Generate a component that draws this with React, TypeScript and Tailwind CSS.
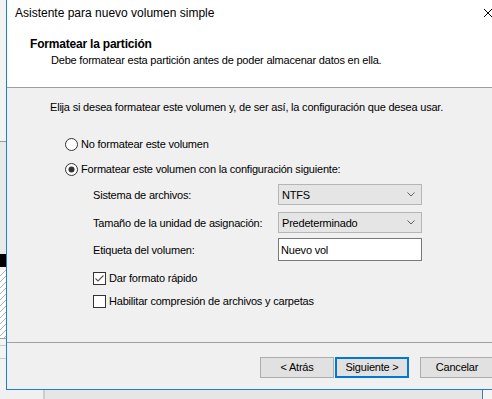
import React from "react";

function Radio({ checked }: { checked?: boolean }) {
  return (
    <svg width="13" height="13" viewBox="0 0 13 13" className="shrink-0">
      <circle cx="6.5" cy="6.5" r="6" fill="#ffffff" stroke="#333333" strokeWidth="1" />
      {checked && <circle cx="6.5" cy="6.5" r="3" fill="#333333" />}
    </svg>
  );
}

function Check({ checked }: { checked?: boolean }) {
  return (
    <svg width="13" height="13" viewBox="0 0 13 13" className="shrink-0">
      <rect x="0.5" y="0.5" width="12" height="12" fill="#ffffff" stroke="#333333" strokeWidth="1" />
      {checked && (
        <polyline points="2.5,6.5 5,9 10.5,3.5" fill="none" stroke="#555555" strokeWidth="1.1" />
      )}
    </svg>
  );
}

function Chevron() {
  return (
    <svg width="8" height="5" viewBox="0 0 8 5" className="shrink-0">
      <polyline points="0.5,0.5 4,4 7.5,0.5" fill="none" stroke="#606060" strokeWidth="1" />
    </svg>
  );
}

function Combo({ value }: { value: string }) {
  return (
    <div className="h-[21px] w-[144px] bg-[#e5e5e5] border border-[#b5b5b5] flex items-center justify-between pl-[3px] pr-[6px]">
      <span className="text-[11px] tracking-[-0.2px] text-black leading-[16px]">{value}</span>
      <Chevron />
    </div>
  );
}

export default function App() {
  return (
    <div className="relative w-[492px] h-[399px] overflow-hidden bg-[#f0f0f0] font-['Liberation_Sans',Arial,sans-serif] text-black">
      {/* desktop behind: left strip */}
      <div className="absolute left-0 top-0 w-[6px] h-[390px] bg-[#f3f3f3]">
        <div className="absolute left-0 top-[141px] w-[6px] h-[1px] bg-[#9a9a9a]" />
        <div className="absolute left-0 top-[142px] w-[6px] h-[112px] bg-[#e9e9e9]" />
        <div className="absolute left-0 top-[254px] w-[6px] h-[13px] bg-black" />
        <div className="absolute left-0 top-[270px] w-[6px] h-[68px] bg-white">
          <svg width="6" height="68" viewBox="0 0 6 68">
            {Array.from({ length: 12 }).map((_, i) => (
              <line key={i} x1="0" y1={i * 6 + 6} x2="6" y2={i * 6} stroke="#9a9a9a" strokeWidth="0.8" />
            ))}
          </svg>
        </div>
        <div className="absolute left-0 top-[338px] w-[6px] h-[1px] bg-[#a0a0a0]" />
        <div className="absolute left-0 top-[345px] w-[6px] h-[1px] bg-[#c8c8c8]" />
        <div className="absolute left-0 top-[358px] w-[6px] h-[1px] bg-[#c8c8c8]" />
      </div>
      {/* desktop behind: bottom strip */}
      <div className="absolute left-0 top-[390px] w-[492px] h-[9px] bg-[#e6e6e6]">
        <div className="absolute left-0 top-0 w-[43px] h-[9px] bg-[#f0f0f0]" />
        <div className="absolute left-[43px] top-0 w-[2px] h-[9px] bg-[#cdcdcd]" />
        <div className="absolute left-[482px] top-0 w-[1px] h-[9px] bg-[#4a78a8]" />
        <div className="absolute left-[483px] top-0 w-[9px] h-[9px] bg-[#f4f4f4]" />
      </div>

      {/* window */}
      <div className="absolute left-[6px] top-0 w-[505px] h-[390px] border-l border-b border-[#1a80d6] bg-white flex flex-col">
        {/* title bar */}
        <div className="h-[25px] flex items-center bg-white">
          <span className="pl-[8px] text-[12px] leading-[16px] mt-[1px]">Asistente para nuevo volumen simple</span>
          <div className="ml-auto w-[46px] h-[25px] flex items-center justify-center">
            <svg width="10" height="10" viewBox="0 0 10 10">
              <line x1="1" y1="1" x2="9" y2="9" stroke="#000" strokeWidth="1" />
              <line x1="9" y1="1" x2="1" y2="9" stroke="#000" strokeWidth="1" />
            </svg>
          </div>
        </div>
        {/* header */}
        <div className="h-[62px] bg-white pl-[23px] pt-[11px]">
          <div className="text-[12px] font-bold leading-[16px] tracking-[-0.2px]">Formatear la partición</div>
          <div className="pl-[21px] text-[11px] leading-[16px] tracking-[-0.2px]">
            Debe formatear esta partición antes de poder almacenar datos en ella.
          </div>
        </div>
        <div className="h-[1px] bg-[#a0a0a0]" />
        {/* body */}
        <div className="h-[254px] bg-[#f0f0f0] text-[11px] leading-[16px] tracking-[-0.2px] flex flex-col">
          <div className="pt-[11px] pl-[43px] h-[27px]">
            Elija si desea formatear este volumen y, de ser así, la configuración que desea usar.
          </div>
          <div className="mt-[21px] pl-[58px] h-[16px] flex items-center gap-[3px]">
            <Radio />
            <span>No formatear este volumen</span>
          </div>
          <div className="mt-[9px] pl-[58px] h-[16px] flex items-center gap-[3px]">
            <Radio checked />
            <span>Formatear este volumen con la configuración siguiente:</span>
          </div>
          <div className="pl-[86px] flex flex-col">
            <div className="mt-[7px] flex items-center">
              <span className="w-[185px]">Sistema de archivos:</span>
              <Combo value="NTFS" />
            </div>
            <div className="mt-[7px] flex items-center">
              <span className="w-[185px]">Tamaño de la unidad de asignación:</span>
              <Combo value="Predeterminado" />
            </div>
            <div className="mt-[5px] flex items-center">
              <span className="w-[185px]">Etiqueta del volumen:</span>
              <div className="h-[23px] w-[144px] bg-white border border-[#7a7a7a] flex items-center pl-[2px]">
                <span>Nuevo vol</span>
              </div>
            </div>
            <div className="mt-[9px] h-[16px] flex items-center gap-[3px]">
              <Check checked />
              <span>Dar formato rápido</span>
            </div>
            <div className="mt-[7px] h-[16px] flex items-center gap-[3px]">
              <Check />
              <span>Habilitar compresión de archivos y carpetas</span>
            </div>
          </div>
        </div>
        <div className="h-[1px] bg-[#a0a0a0]" />
        {/* footer */}
        <div className="h-[46px] bg-[#f0f0f0] pt-[14px] pl-[253px] flex items-start text-[11px] tracking-[-0.2px]">
          <div className="w-[74px] h-[21px] bg-[#e1e1e1] border border-[#adadad] flex items-center justify-center">
            &lt; Atrás
          </div>
          <div className="ml-[1px] w-[74px] h-[21px] bg-[#e1e1e1] border-2 border-[#0078d7] flex items-center justify-center">
            Siguiente &gt;
          </div>
          <div className="ml-[11px] w-[74px] h-[21px] bg-[#e1e1e1] border border-[#adadad] flex items-center justify-center">
            Cancelar
          </div>
        </div>
      </div>
    </div>
  );
}
